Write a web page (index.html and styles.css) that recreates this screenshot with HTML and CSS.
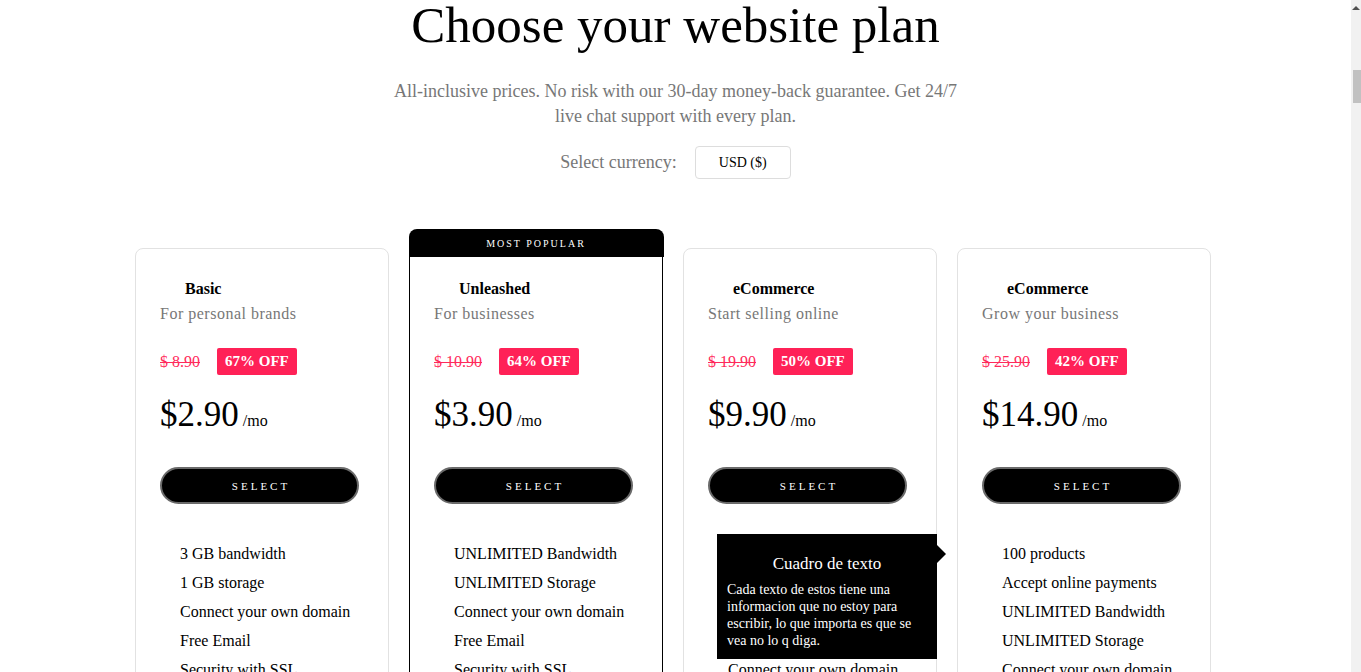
FILE: index.html
```html
<!DOCTYPE html>
<html>
<head>
<meta charset="utf-8">
<link rel="stylesheet" href="styles.css">
</head>
<body>
<main class="page">
  <header class="intro">
    <h1 class="title">Choose your website plan</h1>
    <p class="lead">All-inclusive prices. No risk with our 30-day money-back guarantee. Get 24/7 live chat support with every plan.</p>
    <div class="currency">
      <span class="currency-label">Select currency:</span>
      <button class="currency-select">USD ($)</button>
    </div>
  </header>

  <section class="plans">
    <article class="plan">
      <h3 class="plan-name">Basic</h3>
      <p class="plan-sub">For personal brands</p>
      <div class="deal"><span class="old">$ 8.90</span><span class="off">67% OFF</span></div>
      <div class="price"><span class="amount">$2.90</span> <span class="per">/mo</span></div>
      <button class="select">SELECT</button>
      <ul class="features">
        <li>3 GB bandwidth</li>
        <li>1 GB storage</li>
        <li>Connect your own domain</li>
        <li>Free Email</li>
        <li>Security with SSL</li>
        <li>Basic support</li>
      </ul>
    </article>

    <article class="plan popular">
      <div class="ribbon">MOST POPULAR</div>
      <h3 class="plan-name">Unleashed</h3>
      <p class="plan-sub">For businesses</p>
      <div class="deal"><span class="old">$ 10.90</span><span class="off">64% OFF</span></div>
      <div class="price"><span class="amount">$3.90</span> <span class="per">/mo</span></div>
      <button class="select">SELECT</button>
      <ul class="features">
        <li>UNLIMITED Bandwidth</li>
        <li>UNLIMITED Storage</li>
        <li>Connect your own domain</li>
        <li>Free Email</li>
        <li>Security with SSL</li>
        <li>Priority support</li>
      </ul>
    </article>

    <article class="plan">
      <h3 class="plan-name">eCommerce</h3>
      <p class="plan-sub">Start selling online</p>
      <div class="deal"><span class="old">$ 19.90</span><span class="off">50% OFF</span></div>
      <div class="price"><span class="amount">$9.90</span> <span class="per">/mo</span></div>
      <button class="select">SELECT</button>
      <div class="feature-wrap">
        <ul class="features">
          <li>100 products</li>
          <li>Accept online payments</li>
          <li>UNLIMITED Bandwidth</li>
          <li>UNLIMITED Storage</li>
          <li>Connect your own domain</li>
          <li>Free Email</li>
        </ul>
        <div class="tooltip">
          <div class="tooltip-title">Cuadro de texto</div>
          <p class="tooltip-text">Cada texto de estos tiene una informacion que no estoy para escribir, lo que importa es que se vea no lo q diga.</p>
        </div>
      </div>
    </article>

    <article class="plan">
      <h3 class="plan-name">eCommerce</h3>
      <p class="plan-sub">Grow your business</p>
      <div class="deal"><span class="old">$ 25.90</span><span class="off">42% OFF</span></div>
      <div class="price"><span class="amount">$14.90</span> <span class="per">/mo</span></div>
      <button class="select">SELECT</button>
      <ul class="features">
        <li>100 products</li>
        <li>Accept online payments</li>
        <li>UNLIMITED Bandwidth</li>
        <li>UNLIMITED Storage</li>
        <li>Connect your own domain</li>
        <li>Free Email</li>
      </ul>
    </article>
  </section>
</main>
<div class="scrollbar" aria-hidden="true">
  <span class="scroll-arrow"></span>
  <span class="scroll-thumb"></span>
</div>
</body>
</html>
```

FILE: styles.css
```css
html, body {
  margin: 0;
  padding: 0;
  background: #fff;
}
body {
  font-family: "Liberation Serif", "Times New Roman", serif;
  color: #000;
}
.page {
  display: flex;
  flex-direction: column;
  align-items: center;
  padding: 0 15px 200px 0;
}
.intro {
  display: flex;
  flex-direction: column;
  align-items: center;
  padding-left: 5px;
}
.title {
  margin: 0;
  font-size: 51px;
  font-weight: 400;
  line-height: 50px;
}
.lead {
  margin: 29px 0 0;
  max-width: 570px;
  text-align: center;
  color: #777;
  font-size: 18px;
  line-height: 25px;
}
.currency {
  margin-top: 17px;
  display: flex;
  align-items: center;
  gap: 18px;
}
.currency-label {
  color: #777;
  font-size: 18px;
}
.currency-select {
  width: 96px;
  height: 33px;
  background: #fff;
  border: 1px solid #ddd;
  border-radius: 4px;
  font-family: "Liberation Serif", serif;
  font-size: 14px;
  color: #000;
  padding: 0;
}
.plans {
  margin-top: 69px;
  display: grid;
  grid-template-columns: repeat(4, 254px);
  column-gap: 20px;
  align-items: start;
}
.plan {
  position: relative;
  border: 1px solid #e2e2e2;
  border-radius: 8px;
  padding: 29px 24px 0;
  height: 500px;
  box-sizing: border-box;
}
.plan.popular {
  border: 1.5px solid #000;
  border-radius: 0 0 8px 8px;
}
.ribbon {
  position: absolute;
  top: -20px;
  left: -1.5px;
  right: -1.5px;
  height: 28px;
  background: #000;
  color: #fff;
  border-radius: 8px 8px 0 0;
  font-size: 10px;
  letter-spacing: 2px;
  display: flex;
  align-items: center;
  justify-content: center;
}
.plan-name {
  margin: 0 0 0 25px;
  font-size: 16px;
  font-weight: 700;
  line-height: 22px;
}
.plan-sub {
  margin: 3px 0 0;
  color: #777;
  font-size: 16px;
  letter-spacing: 0.5px;
  line-height: 22px;
}
.deal {
  margin-top: 23px;
  display: flex;
  align-items: center;
  gap: 17px;
}
.old {
  color: #ff2a5b;
  text-decoration: line-through;
  font-size: 16px;
}
.off {
  background: #ff2157;
  color: #fff;
  font-weight: 700;
  font-size: 15px;
  padding: 0 8px;
  height: 27px;
  line-height: 27px;
  border-radius: 2px;
}
.price {
  margin-top: 20px;
  display: flex;
  align-items: baseline;
}
.amount {
  font-size: 35px;
  line-height: 40px;
}
.per {
  font-size: 16px;
  margin-left: 4px;
}
.select {
  margin-top: 32px;
  width: 199px;
  height: 37px;
  background: #000;
  color: #fff;
  border: 2px solid #6a6a6a;
  border-radius: 19px;
  font-family: "Liberation Serif", serif;
  font-size: 11px;
  letter-spacing: 3px;
  padding: 0 0 0 3px;
  display: block;
}
.feature-wrap {
  position: relative;
}
.features {
  list-style: none;
  margin: 35px 0 0;
  padding: 0 0 0 20px;
}
.features li {
  font-size: 16px;
  line-height: 29px;
}
.tooltip {
  position: absolute;
  left: 9px;
  top: -5px;
  width: 220px;
  height: 125px;
  box-sizing: border-box;
  background: #000;
  color: #fff;
  padding: 20px 10px 0;
}
.tooltip::after {
  content: "";
  position: absolute;
  right: -9px;
  top: 11px;
  border-top: 9px solid transparent;
  border-bottom: 9px solid transparent;
  border-left: 9px solid #000;
}
.tooltip-title {
  text-align: center;
  font-size: 17px;
  line-height: 20px;
}
.tooltip-text {
  margin: 7px 0 0;
  font-size: 14px;
  line-height: 17px;
}
.scrollbar {
  position: fixed;
  top: 0;
  right: 0;
  bottom: 0;
  width: 10px;
  background: #f1f1f1;
}
.scroll-arrow {
  position: absolute;
  top: 6px;
  left: 1px;
  border-left: 4px solid transparent;
  border-right: 4px solid transparent;
  border-bottom: 4px solid #505050;
}
.scroll-thumb {
  position: absolute;
  top: 70px;
  left: 2px;
  right: 0;
  height: 33px;
  background: #c1c1c1;
}
```
